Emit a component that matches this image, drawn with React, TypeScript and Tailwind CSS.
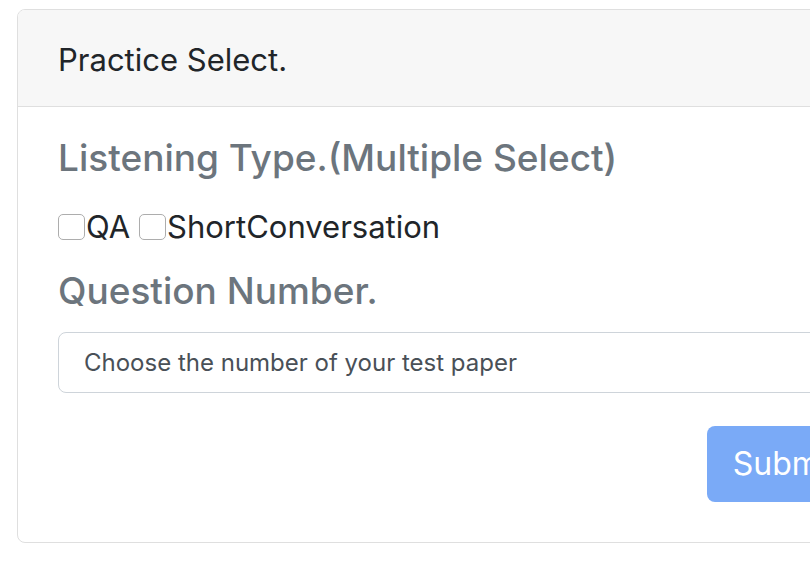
import React from 'react';

export default function App() {
  const [types, setTypes] = React.useState<string[]>([]);
  const [num, setNum] = React.useState('');

  const toggle = (t: string) =>
    setTypes((prev) => (prev.includes(t) ? prev.filter((x) => x !== t) : [...prev, t]));

  const options = ['QA', 'ShortConversation'];

  return (
    <div className="w-[810px] h-[574px] overflow-hidden bg-white font-['Inter',sans-serif] text-[#212529]">
      <div className="ml-[17px] mt-[9px] w-[888px] border border-[#dfdfdf] rounded-[8px] overflow-hidden">
        <div className="h-[97px] bg-[#f7f7f7] border-b border-[#dfdfdf] pl-10 pt-[2px] text-[31px] leading-[96px]">
          Practice Select.
        </div>

        <div className="pt-[29px] px-10 pb-10">
          <h5 className="text-[37px] leading-[44px] font-medium text-[#6c757d]">
            Listening Type.(Multiple Select)
          </h5>

          <div className="mt-[24px] h-[45px] flex items-center text-[31px] leading-[45px]">
            {options.map((t, i) => (
              <label key={t} className="flex items-center cursor-pointer">
                {i > 0 && <span className="w-[9px]" />}
                <input
                  type="checkbox"
                  checked={types.includes(t)}
                  onChange={() => toggle(t)}
                  className="appearance-none w-[27px] h-[26px] border border-[#adadad] rounded-[5px] bg-white checked:bg-[#0d6efd] mr-[1px]"
                />
                <span>{t}</span>
              </label>
            ))}
          </div>

          <h5 className="mt-[20px] text-[37px] leading-[44px] font-medium text-[#6c757d]">
            Question Number.
          </h5>

          <select
            value={num}
            onChange={(e) => setNum(e.target.value)}
            className="mt-[19px] block w-full h-[61px] appearance-none border border-[#ced4da] rounded-[8px] bg-white pl-[25px] text-[24px] text-[#495057] outline-none"
          >
            <option value="">Choose the number of your test paper</option>
            <option value="1">1</option>
            <option value="2">2</option>
            <option value="3">3</option>
          </select>

          <div className="mt-[33px] flex justify-end">
            <button
              disabled={!types.length || !num}
              className="h-[76px] px-[26px] rounded-[8px] bg-[#7aaaf7] text-white disabled:text-white text-[32px]"
            >
              Submit
            </button>
          </div>
        </div>
      </div>
    </div>
  );
}
